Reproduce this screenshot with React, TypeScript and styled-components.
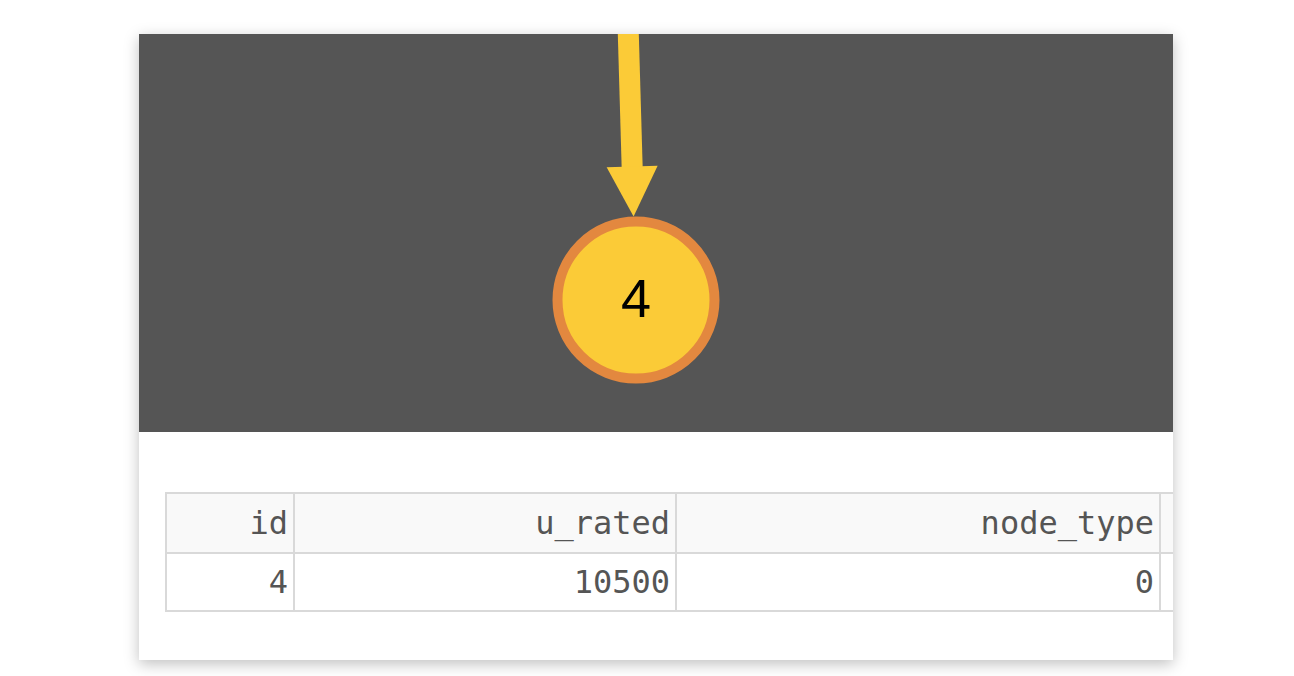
import React from 'react'
import styled, { createGlobalStyle } from 'styled-components'

const columns = [
    { key: 'id', width: 128 },
    { key: 'u_rated', width: 382 },
    { key: 'node_type', width: 484 },
    { key: 'x', width: 220 },
]

const row: Record<string, string> = { id: '4', u_rated: '10500', node_type: '0', x: '' }

// arrow aims from far above toward the node centre
const NODE = { x: 497, y: 266, r: 78.5, stroke: 10 }

const GraphCanvas = () => {
    const dx = 7.7, dy = 266
    const len = Math.sqrt(dx * dx + dy * dy)
    const ux = dx / len, uy = dy / len
    const outer = NODE.r + NODE.stroke / 2
    const tipX = NODE.x - ux * outer
    const tipY = NODE.y - uy * outer
    const baseX = tipX - ux * 50
    const baseY = tipY - uy * 50
    const startX = baseX - ux * 160
    const startY = baseY - uy * 160
    const px = uy, py = -ux

    return (
        <Canvas>
            <svg width="1034" height="398" viewBox="0 0 1034 398" xmlns="http://www.w3.org/2000/svg">
                <line x1={startX} y1={startY} x2={baseX + ux} y2={baseY + uy} stroke="#fbcb37" strokeWidth="21" />
                <polygon
                    fill="#fbcb37"
                    points={`${tipX},${tipY} ${baseX + px * 25.5},${baseY + py * 25.5} ${baseX - px * 25.5},${baseY - py * 25.5}`}
                />
                <circle cx={NODE.x} cy={NODE.y} r={NODE.r} fill="#fbcb37" stroke="#e3883f" strokeWidth={NODE.stroke} />
                <NodeLabel x={NODE.x} y={283} textAnchor="middle">4</NodeLabel>
            </svg>
        </Canvas>
    )
}

const App = () => {
    return (
        <>
            <GlobalStyle />
            <Page>
                <Card>
                    <GraphCanvas />
                    <TableArea>
                        <DataTable>
                            <colgroup>
                                {columns.map(c => <col key={c.key} style={{ width: c.width }} />)}
                            </colgroup>
                            <thead>
                                <tr>
                                    {columns.map(c => <HeadCell key={c.key}>{c.key === 'x' ? '' : c.key}</HeadCell>)}
                                </tr>
                            </thead>
                            <tbody>
                                <tr>
                                    {columns.map(c => <BodyCell key={c.key}>{row[c.key]}</BodyCell>)}
                                </tr>
                            </tbody>
                        </DataTable>
                    </TableArea>
                </Card>
            </Page>
        </>
    )
}

const GlobalStyle = createGlobalStyle`
    body {
        margin: 0;
        background: #ffffff;
        font-family: "Liberation Sans", Arial, sans-serif;
    }
`

const Page = styled.div`
    padding: 34px 0 16px 139px;
`

const Card = styled.div`
    width: 1034px;
    height: 626px;
    background: #ffffff;
    box-shadow: 0 4px 14px rgba(0, 0, 0, 0.25);
    display: flex;
    flex-direction: column;
    overflow: hidden;
`

const Canvas = styled.div`
    height: 398px;
    background: #555555;
    flex-shrink: 0;

    svg {
        display: block;
    }
`

const NodeLabel = styled.text`
    font-family: "Liberation Sans", Arial, sans-serif;
    font-size: 54px;
    fill: #000000;
`

const TableArea = styled.div`
    padding: 60px 0 0 26px;
    overflow: hidden;
`

const DataTable = styled.table`
    table-layout: fixed;
    width: 1214px;
    border-collapse: separate;
    border-spacing: 0;
    border-top: 2px solid #d9d9d9;
    border-left: 2px solid #d9d9d9;
    font-family: "DejaVu Sans Mono", monospace;
    font-size: 32px;
    color: #555555;
`

const HeadCell = styled.th`
    height: 58px;
    padding: 0 5px 0 0;
    text-align: right;
    font-weight: normal;
    background: #f9f9f9;
    border-right: 2px solid #d9d9d9;
    border-bottom: 2px solid #d9d9d9;
    box-sizing: content-box;
`

const BodyCell = styled.td`
    height: 56px;
    padding: 0 5px 0 0;
    text-align: right;
    border-right: 2px solid #d9d9d9;
    border-bottom: 2px solid #d9d9d9;
    box-sizing: content-box;
`

export default App
